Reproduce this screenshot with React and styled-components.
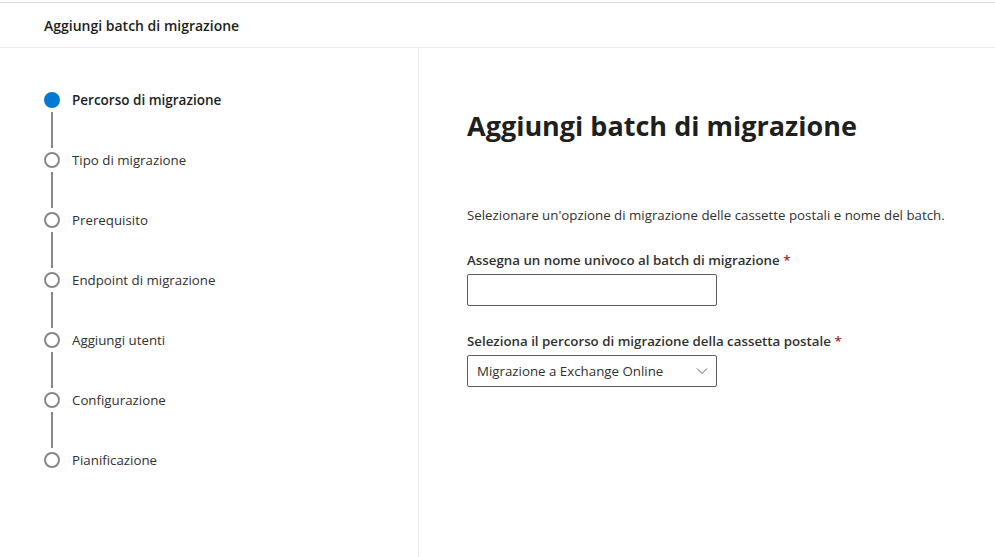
import styled, { createGlobalStyle } from "styled-components"

const GlobalStyle = createGlobalStyle`
    body {
        margin: 0;
        font-family: "Open Sans", "Noto Sans", sans-serif;
        color: #323130;
        background: #ffffff;
    }
`

const steps = [
    "Percorso di migrazione",
    "Tipo di migrazione",
    "Prerequisito",
    "Endpoint di migrazione",
    "Aggiungi utenti",
    "Configurazione",
    "Pianificazione",
]

const App = () => {
    return (
        <Page>
            <GlobalStyle />
            <Header>
                <HeaderTitle>Aggiungi batch di migrazione</HeaderTitle>
            </Header>
            <Body>
                <Side>
                    <StepList>
                        {steps.map((label, i) => (
                            <Step key={label}>
                                <Track>
                                    <Dot active={i === 0} />
                                    {i < steps.length - 1 && <Connector />}
                                </Track>
                                <StepLabel active={i === 0}>{label}</StepLabel>
                            </Step>
                        ))}
                    </StepList>
                </Side>
                <Main>
                    <Title>Aggiungi batch di migrazione</Title>
                    <Description>
                        Selezionare un'opzione di migrazione delle cassette postali e nome del batch.
                    </Description>
                    <Field>
                        <Label>
                            Assegna un nome univoco al batch di migrazione <Required>*</Required>
                        </Label>
                        <TextInput type="text" />
                    </Field>
                    <Field>
                        <Label>
                            Seleziona il percorso di migrazione della cassetta postale <Required>*</Required>
                        </Label>
                        <Dropdown>
                            <span>Migrazione a Exchange Online</span>
                            <svg width="12" height="12" viewBox="0 0 12 12">
                                <path d="M1 3.5 L6 8.5 L11 3.5" fill="none" stroke="#605e5c" strokeWidth="1" />
                            </svg>
                        </Dropdown>
                    </Field>
                </Main>
            </Body>
        </Page>
    )
}

export default App

const Page = styled.div`
    display: flex;
    flex-direction: column;
    height: 557px;
    padding-top: 2px;
    box-sizing: border-box;
`

const Header = styled.div`
    display: flex;
    align-items: center;
    height: 44px;
    padding-left: 44px;
    border-top: 1px solid #d8d6d4;
    border-bottom: 1px solid #edebe9;
`

const HeaderTitle = styled.span`
    font-size: 14px;
    font-weight: 600;
    color: #201f1e;
`

const Body = styled.div`
    display: flex;
    flex: 1;
`

const Side = styled.div`
    width: 419px;
    border-right: 1px solid #edebe9;
    box-sizing: border-box;
    padding: 44px 0 0 44px;
`

const StepList = styled.div`
    display: flex;
    flex-direction: column;
`

const Step = styled.div`
    display: flex;
    gap: 12px;
`

const Track = styled.div`
    display: flex;
    flex-direction: column;
    align-items: center;
    width: 16px;
`

const Dot = styled.div`
    width: 16px;
    height: 16px;
    border-radius: 50%;
    box-sizing: border-box;
    background: ${p => (p.active ? "#0078d4" : "#ffffff")};
    border: 2px solid ${p => (p.active ? "#0078d4" : "#8a8886")};
`

const Connector = styled.div`
    width: 2px;
    height: 36px;
    margin: 4px 0;
    background: #8a8886;
`

const StepLabel = styled.span`
    font-size: ${p => (p.active ? "13.5px" : "13.3px")};
    line-height: 16px;
    font-weight: ${p => (p.active ? 600 : 400)};
    color: ${p => (p.active ? "#201f1e" : "#323130")};
`

const Main = styled.div`
    flex: 1;
    padding: 60px 0 0 48px;
    display: flex;
    flex-direction: column;
`

const Title = styled.h1`
    margin: 0;
    font-size: 27px;
    line-height: 36px;
    font-weight: 700;
    color: #201f1e;
`

const Description = styled.p`
    margin: 61px 0 0;
    font-size: 13.3px;
    line-height: 20px;
`

const Field = styled.div`
    display: flex;
    flex-direction: column;
    margin-top: 25px;

    & + & {
        margin-top: 25px;
    }
`

const Label = styled.label`
    font-size: 13.3px;
    font-weight: 600;
    line-height: 20px;
    padding-bottom: 4px;
    color: #323130;
`

const Required = styled.span`
    color: #a4262c;
`

const TextInput = styled.input`
    width: 250px;
    height: 32px;
    box-sizing: border-box;
    border: 1px solid #605e5c;
    border-radius: 2px;
    outline: none;
    padding: 0 8px;
    font-family: inherit;
`

const Dropdown = styled.div`
    width: 250px;
    height: 32px;
    box-sizing: border-box;
    border: 1px solid #605e5c;
    border-radius: 2px;
    display: flex;
    align-items: center;
    justify-content: space-between;
    padding: 0 8px 0 9px;
    font-size: 13.3px;
    color: #323130;
`
